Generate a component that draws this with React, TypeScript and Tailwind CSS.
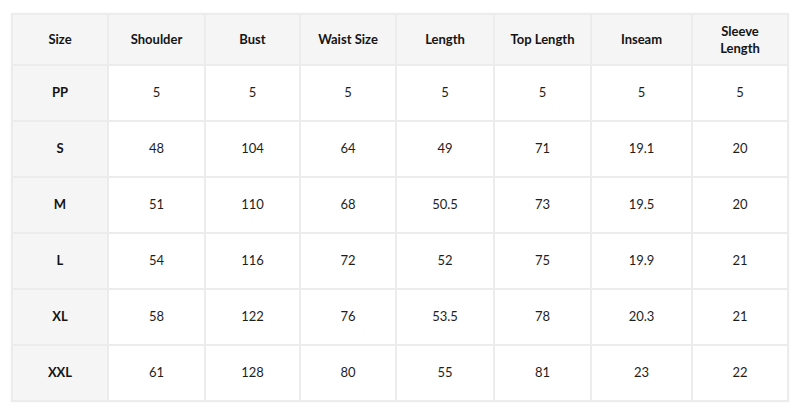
const headers = [
  "Size",
  "Shoulder",
  "Bust",
  "Waist Size",
  "Length",
  "Top Length",
  "Inseam",
  "Sleeve Length"
];

const widths = ["w-[96px]", "w-[97px]", "w-[95px]", "w-[96px]", "w-[98px]", "w-[97px]", "w-[101px]", "w-[96px]"];

const rows: string[][] = [
  ["PP", "5", "5", "5", "5", "5", "5", "5"],
  ["S", "48", "104", "64", "49", "71", "19.1", "20"],
  ["M", "51", "110", "68", "50.5", "73", "19.5", "20"],
  ["L", "54", "116", "72", "52", "75", "19.9", "21"],
  ["XL", "58", "122", "76", "53.5", "78", "20.3", "21"],
  ["XXL", "61", "128", "80", "55", "81", "23", "22"]
];

export default function App() {
  return (
    <div className="w-[800px] h-[414px] bg-white pt-[13px] pl-[11px] font-['Lato','Noto_Sans',sans-serif] text-[#141414]">
      <table className="border-collapse table-fixed w-[778px] shadow-[0_0_2px_rgba(0,0,0,0.06)]">
        <thead>
          <tr className="h-[51px] bg-[#f5f5f5]">
            {headers.map((h, i) => (
              <th
                key={h}
                className={`${widths[i]} border-2 border-[#ececec] text-[13px] font-bold leading-[17px] text-center px-3`}
              >
                {h}
              </th>
            ))}
          </tr>
        </thead>
        <tbody>
          {rows.map((row) => (
            <tr key={row[0]} className="h-[56px]">
              {row.map((cell, i) => (
                <td
                  key={i}
                  className={
                    i === 0
                      ? "border-2 border-[#ececec] bg-[#f5f5f5] text-[13px] font-bold text-center"
                      : "border-2 border-[#ececec] bg-white text-[13px] text-center text-[#1e1e1e]"
                  }
                >
                  {cell}
                </td>
              ))}
            </tr>
          ))}
        </tbody>
      </table>
    </div>
  );
}
